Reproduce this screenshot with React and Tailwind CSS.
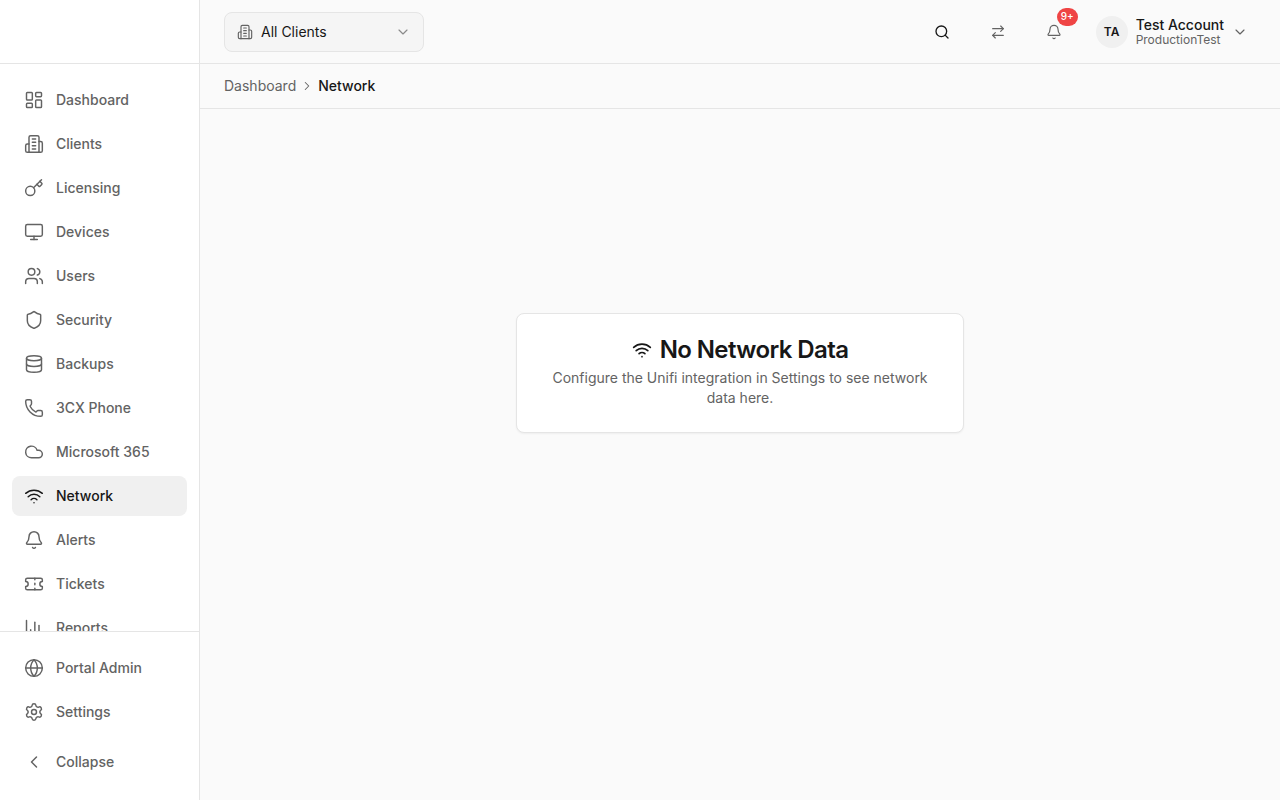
import {
  LayoutDashboard, Key, Monitor, Users, Shield, Database, Phone, Cloud, Wifi, Bell, Ticket,
  ChartColumn, Globe, Settings, ChevronLeft, ChevronDown, ChevronRight, Search, ArrowRightLeft,
} from "lucide-react";

// older lucide building icon, the current package draws a different one
function ClientsIcon({ className }) {
  return (
    <svg className={className} viewBox="0 0 24 24" fill="none" stroke="currentColor" strokeWidth="1.75" strokeLinecap="round" strokeLinejoin="round">
      <path d="M6 22V4a2 2 0 0 1 2-2h8a2 2 0 0 1 2 2v18Z" />
      <path d="M6 12H4a2 2 0 0 0-2 2v6a2 2 0 0 0 2 2h2" />
      <path d="M18 9h2a2 2 0 0 1 2 2v9a2 2 0 0 1-2 2h-2" />
      <path d="M10 6h4" />
      <path d="M10 10h4" />
      <path d="M10 14h4" />
      <path d="M10 18h4" />
    </svg>
  );
}

const navItems = [
  { label: "Dashboard", icon: LayoutDashboard },
  { label: "Clients", icon: ClientsIcon },
  { label: "Licensing", icon: Key },
  { label: "Devices", icon: Monitor },
  { label: "Users", icon: Users },
  { label: "Security", icon: Shield },
  { label: "Backups", icon: Database },
  { label: "3CX Phone", icon: Phone },
  { label: "Microsoft 365", icon: Cloud },
  { label: "Network", icon: Wifi, active: true },
  { label: "Alerts", icon: Bell },
  { label: "Tickets", icon: Ticket },
  { label: "Reports", icon: ChartColumn },
];

function NavItem({ item }) {
  const Icon = item.icon;
  return (
    <a
      href="#"
      className={`flex h-10 shrink-0 items-center gap-3 rounded-lg px-3 text-sm font-medium ${
        item.active ? "bg-[#f0f0f0] text-[#171717]" : "text-[#636363]"
      }`}
    >
      <Icon className="h-5 w-5 shrink-0" strokeWidth={1.75} />
      <span>{item.label}</span>
    </a>
  );
}

export default function App() {
  return (
    <div className="flex h-screen overflow-hidden bg-[#fafafa] font-['Inter',sans-serif] text-[#171717]">
      {/* Sidebar */}
      <aside className="flex w-[200px] shrink-0 flex-col border-r border-[#e5e5e5] bg-white">
        <div className="h-16 shrink-0 border-b border-[#e5e5e5]"></div>
        <nav className="flex min-h-0 flex-1 flex-col gap-1 overflow-hidden px-3 pt-4">
          {navItems.map((item) => (
            <NavItem key={item.label} item={item} />
          ))}
        </nav>
        <div className="flex shrink-0 flex-col gap-1 border-t border-[#e5e5e5] px-3 pt-4">
          <NavItem item={{ label: "Portal Admin", icon: Globe }} />
          <NavItem item={{ label: "Settings", icon: Settings }} />
          <button className="mt-[6px] mb-[18px] flex h-10 items-center gap-3 px-3 text-sm font-medium text-[#636363]">
            <ChevronLeft className="h-5 w-5" strokeWidth={1.75} />
            <span>Collapse</span>
          </button>
        </div>
      </aside>

      <div className="flex min-w-0 flex-1 flex-col">
        {/* Top bar */}
        <header className="flex h-16 shrink-0 items-center justify-between border-b border-[#e5e5e5] pl-6 pr-8">
          <button className="flex h-10 w-[200px] items-center gap-2 rounded-lg border border-[#e5e5e5] bg-[#f5f5f5] px-3 text-sm text-[#171717]">
            <ClientsIcon className="h-4 w-4 text-[#636363]" />
            <span className="flex-1 text-left">All Clients</span>
            <ChevronDown className="h-4 w-4 text-[#8a8a8a]" strokeWidth={1.75} />
          </button>
          <div className="flex items-center">
            <button className="flex h-10 w-10 items-center justify-center text-[#171717]">
              <Search className="h-4 w-4" />
            </button>
            <button className="ml-4 flex h-10 w-10 items-center justify-center text-[#636363]">
              <ArrowRightLeft className="h-4 w-4" strokeWidth={1.75} />
            </button>
            <button className="relative ml-4 flex h-10 w-10 items-center justify-center text-[#636363]">
              <Bell className="h-4 w-4" strokeWidth={1.75} />
              <span className="absolute left-[23px] top-[-4px] flex h-[18px] w-[21px] items-center justify-center rounded-full bg-[#ef4444] text-[10px] font-medium text-white">
                9+
              </span>
            </button>
            <div className="ml-[22px] flex items-center gap-2">
              <div className="flex h-8 w-8 items-center justify-center rounded-full bg-[#f0f0f0] text-xs font-semibold text-[#171717]">
                TA
              </div>
              <div className="flex flex-col">
                <span className="text-sm font-medium leading-[16px]">Test Account</span>
                <span className="text-xs leading-[14px] text-[#636363]">ProductionTest</span>
              </div>
              <ChevronDown className="h-4 w-4 text-[#636363]" strokeWidth={1.75} />
            </div>
          </div>
        </header>

        {/* Breadcrumb */}
        <div className="flex h-[45px] shrink-0 items-center gap-1 border-b border-[#e5e5e5] px-6 text-sm">
          <span className="text-[#636363]">Dashboard</span>
          <ChevronRight className="h-3.5 w-3.5 text-[#636363]" strokeWidth={1.75} />
          <span className="font-medium text-[#171717]">Network</span>
        </div>

        {/* Empty state */}
        <main className="flex flex-1 justify-center pt-[204px]">
          <div className="h-[120px] w-[448px] rounded-lg border border-[#e5e5e5] bg-white px-6 pt-5 text-center shadow-xs">
            <h2 className="flex items-center justify-center gap-2 text-2xl font-semibold leading-8 tracking-tight">
              <Wifi className="h-5 w-5" />
              No Network Data
            </h2>
            <p className="mt-0.5 text-sm leading-5 text-[#636363]">
              Configure the Unifi integration in Settings to see network data here.
            </p>
          </div>
        </main>
      </div>
    </div>
  );
}
